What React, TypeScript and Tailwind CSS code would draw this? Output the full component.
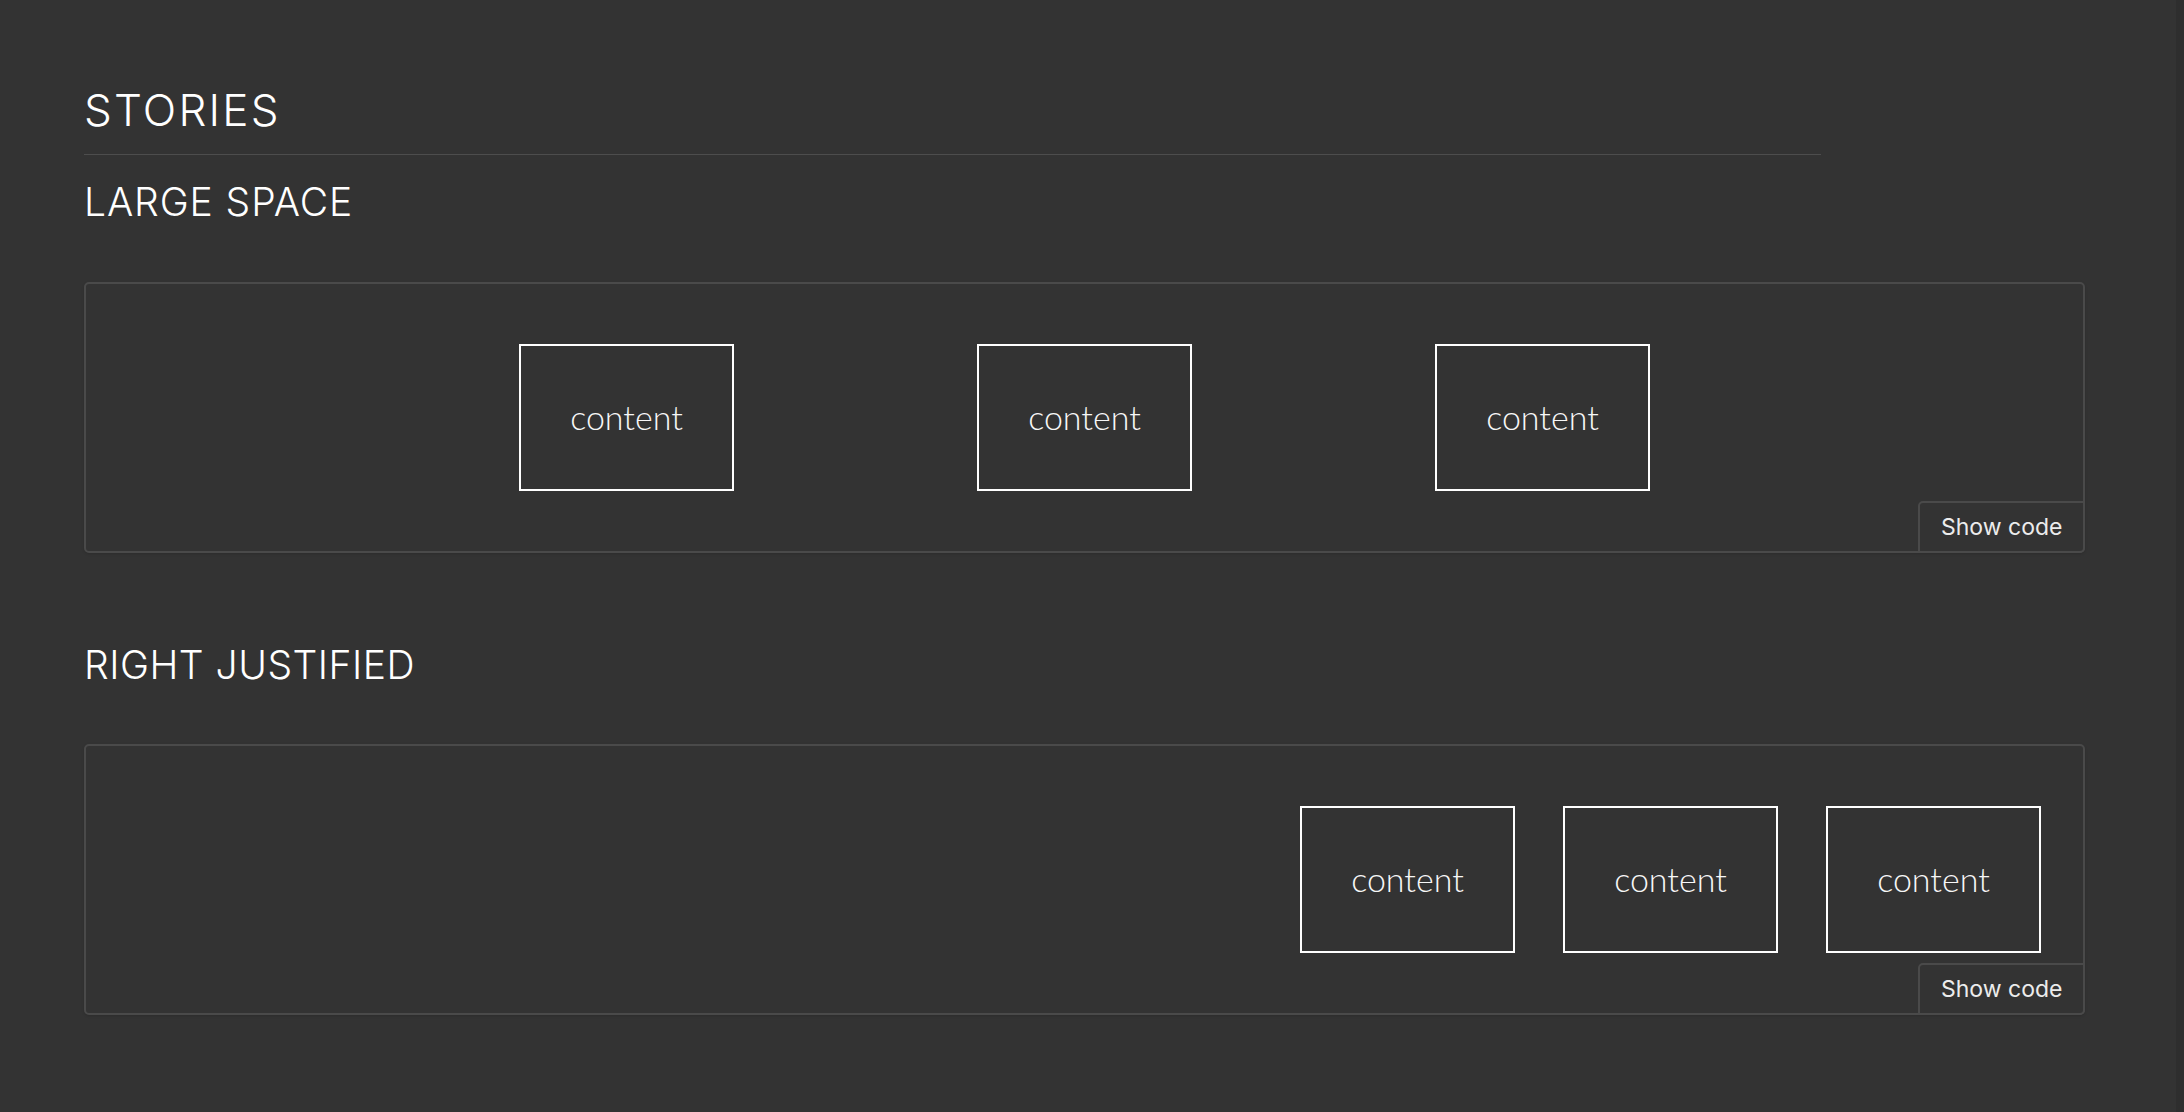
import React from "react";

const Box = () => (
  <div className="w-[215px] h-[147px] border-2 border-white flex items-center justify-center shrink-0">
    <span className="text-[34px] font-light text-[#f7f7f7] leading-none -mt-[2px]" style={{ fontFamily: "Lato, 'Open Sans', sans-serif" }}>
      content
    </span>
  </div>
);

const ShowCode = () => (
  <button className="absolute right-[-2px] bottom-[-2px] w-[167px] h-[52px] border-2 border-[#4a4a4a] rounded-tl-[5px] rounded-br-[5px] bg-[#333333] text-[23px] text-[#ececec] leading-none pl-[21px] text-left">
    Show code
  </button>
);

export default function App() {
  return (
    <div className="min-h-screen h-[1112px] w-full bg-[#333333] flex" style={{ fontFamily: "Inter, 'Noto Sans', sans-serif" }}>
      <main className="flex-1 pl-[84px] pr-[91px] pt-[88px]">
        <h2 className="text-[44px] leading-[44px] font-light tracking-[2.2px] text-white uppercase pb-[22px] border-b border-[#4d4d4d] max-w-[1737px]">
          Stories
        </h2>
        <h3 className="mt-[27px] text-[39px] leading-[39px] font-light tracking-[0.9px] text-white uppercase">Large Space</h3>
        <div className="relative mt-[61px] h-[271px] border-2 border-[#4a4a4a] rounded-[5px] flex items-center justify-center gap-[243px] shadow-[0_1px_3px_rgba(0,0,0,0.15)]">
          <Box />
          <Box />
          <Box />
          <ShowCode />
        </div>
        <h3 className="mt-[92px] text-[39px] leading-[39px] font-light tracking-[0.5px] text-white uppercase">Right Justified</h3>
        <div className="relative mt-[60px] h-[271px] border-2 border-[#4a4a4a] rounded-[5px] flex items-center justify-end gap-[48px] pr-[42px] shadow-[0_1px_3px_rgba(0,0,0,0.15)]">
          <Box />
          <Box />
          <Box />
          <ShowCode />
        </div>
      </main>
      <div className="w-[8px] bg-[#2e2e2e]" />
    </div>
  );
}
